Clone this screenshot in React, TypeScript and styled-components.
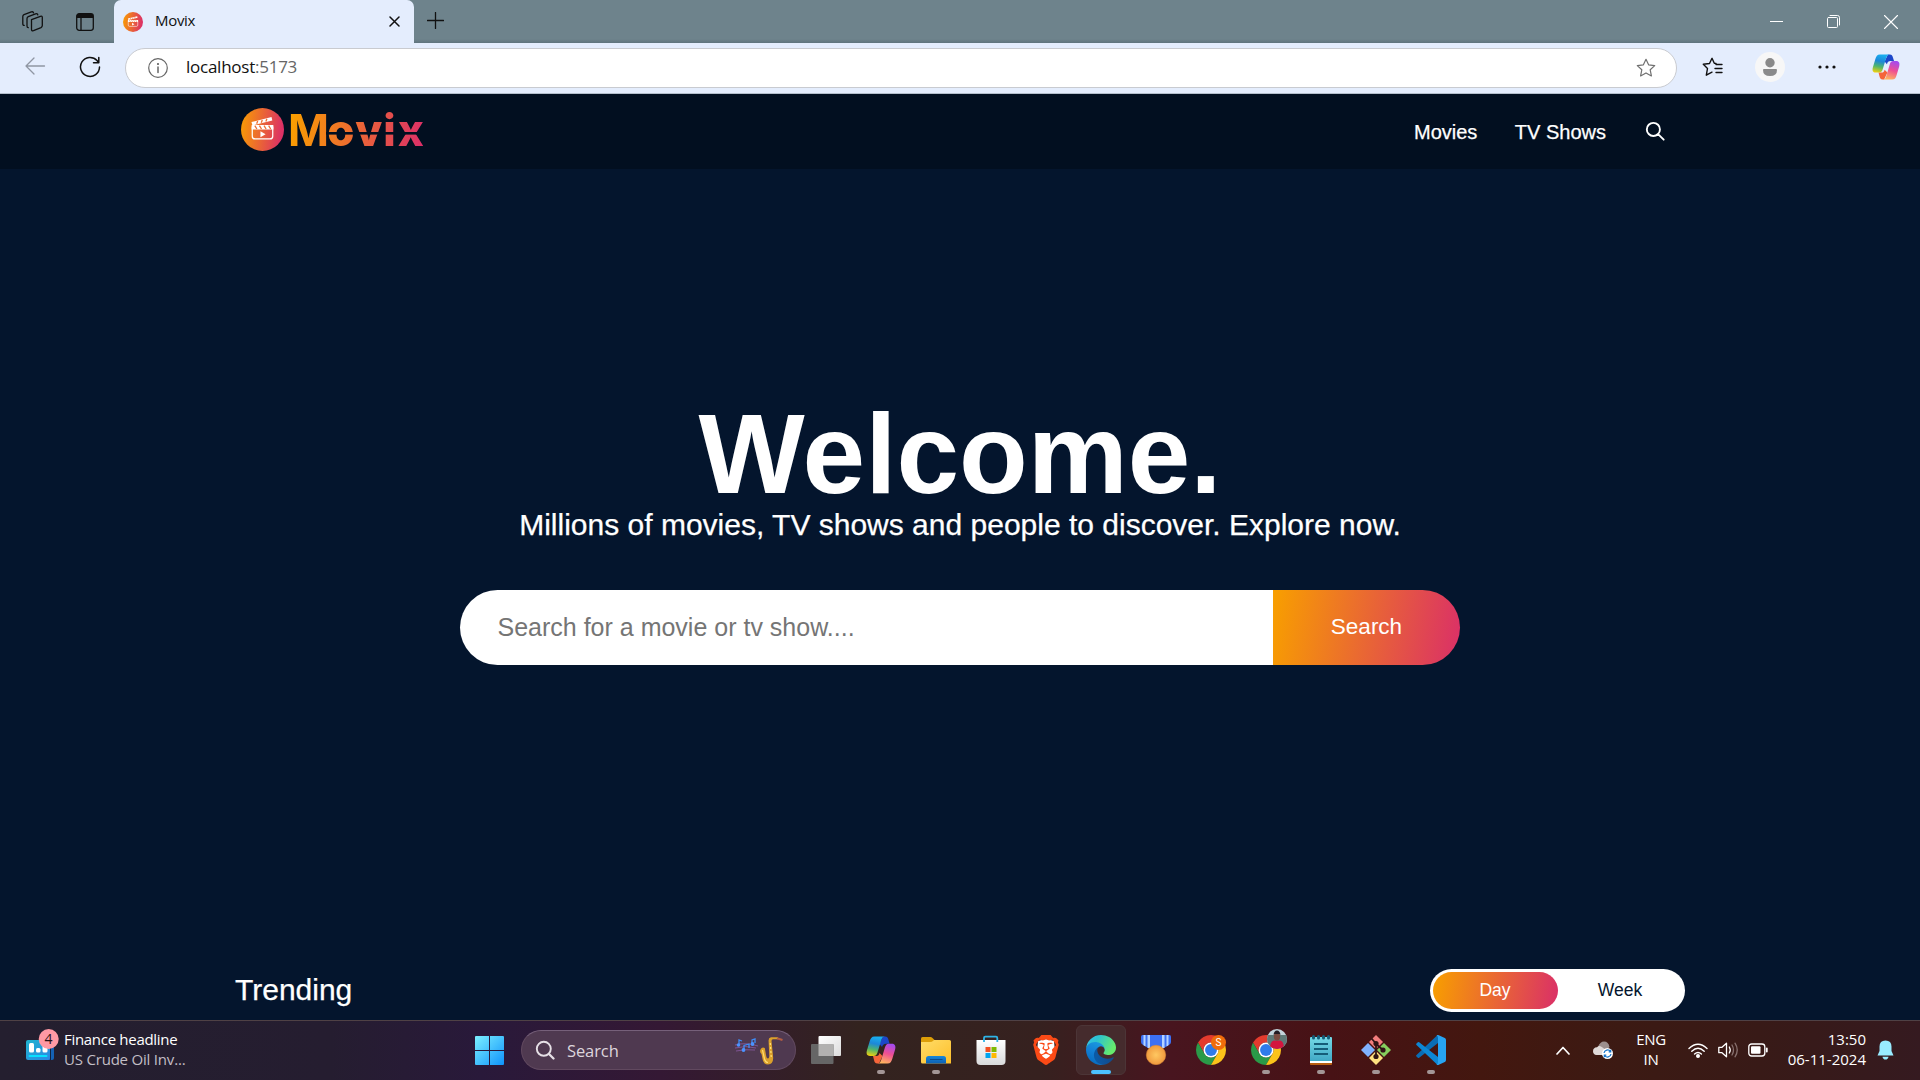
import React from "react";
import styled, { createGlobalStyle } from "styled-components";
import { HiOutlineSearch } from "react-icons/hi";
import { SiBrave } from "react-icons/si";

const UI = `"Open Sans", "Noto Sans", sans-serif`;
const GRADIENT = "linear-gradient(98.37deg, #f89e00 0.99%, #da2f68 100%)";

const GlobalStyle = createGlobalStyle`
  * { box-sizing: border-box; }
  body {
    margin: 0;
    background: #04152d;
    font-family: Arial, "Liberation Sans", sans-serif;
    overflow: hidden;
  }
  svg { display: block; flex-shrink: 0; }
`;

const Screen = styled.div`
  width: 1920px;
  height: 1080px;
  display: flex;
  flex-direction: column;
  overflow: hidden;
`;

/* ---------- browser chrome ---------- */

const TabStrip = styled.div`
  height: 43px;
  display: flex;
  background: linear-gradient(#6e838c 0 39px, #5f747e 43px);
`;

const StripTools = styled.div`
  width: 114px;
  height: 43px;
  display: flex;
  align-items: center;
  gap: 33px;
  padding-left: 22px;
`;

const Tab = styled.div`
  width: 300px;
  height: 43px;
  display: flex;
  align-items: center;
  padding: 0 14px 0 9px;
  background: #e4edfd;
  border-radius: 7px 7px 0 0;
`;

const TabTitle = styled.span`
  flex: 1;
  margin-left: 12px;
  margin-top: -3px;
  font: 15px/20px ${UI};
  letter-spacing: -0.3px;
  color: #111;
`;

const NewTab = styled.div`
  padding: 12px 13px;
`;

const WindowControls = styled.div`
  margin-left: auto;
  display: flex;
  align-items: center;
  gap: 44px;
  padding-right: 22px;
`;

const Toolbar = styled.div`
  height: 51px;
  display: flex;
  align-items: center;
  padding: 0 20px 2px 24px;
  background: #e4edfd;
  border-bottom: 1px solid #b4bfcc;
`;

const NavButtons = styled.div`
  display: flex;
  gap: 33px;
  width: 101px;
`;

const AddressBar = styled.div`
  width: 1552px;
  height: 40px;
  margin-top: 1px;
  display: flex;
  align-items: center;
  padding: 0 20px 0 22px;
  background: #fff;
  border: 1px solid #c9cbd0;
  border-radius: 20px;
`;

const Url = styled.div`
  flex: 1;
  margin-left: 18px;
  margin-top: -1px;
  font: 17px/24px ${UI};
  letter-spacing: -0.25px;
  color: #111;
`;

const Port = styled.span`
  color: #666;
`;

const ToolbarActions = styled.div`
  display: flex;
  align-items: center;
  flex: 1;
  padding-left: 25px;
`;

const Avatar = styled.div`
  margin: 0 33px 0 32px;
`;

const CopilotButton = styled.div`
  margin-left: auto;
`;

/* ---------- site ---------- */

const Site = styled.div`
  height: 926px;
  display: flex;
  flex-direction: column;
  background: #04152d;
`;

const Header = styled.header`
  height: 75px;
  display: flex;
  align-items: center;
  justify-content: space-between;
  padding: 0 254px 0 235px;
  background: #020f20;
`;

const Logo = styled.div`
  height: 75px;
  padding-left: 6px;
`;

const Menu = styled.nav`
  display: flex;
  align-items: center;
  gap: 37.5px;
`;

const MenuItem = styled.a`
  font-size: 20px;
  line-height: 24px;
  color: #fff;
  -webkit-text-stroke: 0.25px #fff;
`;

const SearchLink = styled.a`
  display: flex;
  color: #fff;
  font-size: 22.5px;
`;

const Hero = styled.section`
  flex: 1;
  display: flex;
  flex-direction: column;
  align-items: center;
  padding-top: 229px;
  color: #fff;
`;

const Title = styled.h1`
  margin: 0;
  font-size: 112.5px;
  line-height: 112px;
  font-weight: 700;
`;

const SubTitle = styled.p`
  margin: 0 0 50px;
  font-size: 30px;
  line-height: 30px;
  -webkit-text-stroke: 0.25px #fff;
`;

const SearchForm = styled.div`
  display: flex;
  width: 1000px;
  height: 75px;
`;

const SearchInput = styled.input`
  width: 813px;
  padding: 0 37.5px;
  border: 0;
  outline: 0;
  border-radius: 37.5px 0 0 37.5px;
  background: #fff;
  font: 25px "Liberation Sans", Arial, sans-serif;
  &::placeholder { color: #757575; }
`;

const SearchButton = styled.button`
  width: 187px;
  padding: 0 0 2px 0;
  border: 0;
  border-radius: 0 37.5px 37.5px 0;
  background: ${GRADIENT};
  color: #fff;
  font: 22.5px "Liberation Sans", Arial, sans-serif;
`;

const TrendingRow = styled.section`
  display: flex;
  align-items: center;
  justify-content: space-between;
  padding: 0 235px 8.5px;
`;

const SectionTitle = styled.span`
  font-size: 30px;
  line-height: 34px;
  color: #fff;
  -webkit-text-stroke: 0.25px #fff;
`;

const Switch = styled.div`
  display: flex;
  height: 42.5px;
  padding: 2.5px;
  border-radius: 22px;
  background: #fff;
`;

const SwitchItem = styled.span<{ $active?: boolean }>`
  width: 125px;
  height: 37.5px;
  border-radius: 19px;
  text-align: center;
  font-size: 17.5px;
  line-height: 36px;
  color: ${(p) => (p.$active ? "#fff" : "#04152d")};
  background: ${(p) => (p.$active ? GRADIENT : "none")};
`;

/* ---------- taskbar ---------- */

const Taskbar = styled.footer`
  height: 60px;
  display: flex;
  border-top: 1px solid #4f4145;
  color: #fff;
  font-family: ${UI};
  background: linear-gradient(
    90deg,
    #241f2f 0, #251d30 330px, #29193a 480px, #341834 660px, #33231f 860px,
    #36211f 1040px, #48151f 1170px, #471215 1330px, #43170f 1480px,
    #3c1a13 1620px, #381a17 1760px, #351a20 1920px
  );
`;

const Widgets = styled.div`
  width: 462px;
  display: flex;
  padding: 8px 0 0 25px;
`;

const WidgetText = styled.div`
  display: flex;
  flex-direction: column;
  margin-left: 4px;
  font-size: 15px;
  line-height: 20px;
  letter-spacing: -0.3px;
`;

const Muted = styled.span`
  letter-spacing: -0.2px;
  color: #c3bfc6;
`;

const StartButton = styled.div`
  width: 59px;
  padding: 15px 0 0 13px;
`;

const TaskSearch = styled.div`
  width: 275px;
  height: 40px;
  margin: 9px 2px 0 0;
  display: flex;
  align-items: center;
  padding: 0 11px 0 13px;
  border: 1px solid #61495f;
  border-top-color: #76607a;
  border-radius: 20px;
  background: #4f3950;
`;

const TaskSearchLabel = styled.span`
  flex: 1;
  margin-left: 12px;
  margin-top: 1px;
  font-size: 16.5px;
  letter-spacing: -0.1px;
  color: #ddd5dc;
`;

const AppCell = styled.div`
  width: 55px;
  height: 59px;
  display: flex;
  justify-content: center;
  padding-top: 4px;
`;

const AppTile = styled.div<{ $active?: boolean }>`
  width: 50px;
  height: 50px;
  display: flex;
  flex-direction: column;
  align-items: center;
  padding-top: 5px;
  border-radius: 6px;
  border: 1px solid ${(p) => (p.$active ? "#4c3537" : "transparent")};
  background: ${(p) => (p.$active ? "#452b2d" : "none")};
`;

const Indicator = styled.div<{ $active?: boolean }>`
  width: ${(p) => (p.$active ? 20 : 8)}px;
  height: 4px;
  border-radius: 2px;
  background: ${(p) => (p.$active ? "#4cc2ff" : "#a39696")};
`;

const Tray = styled.div`
  margin-left: auto;
  display: flex;
  align-items: center;
  padding: 0 26px 1px 0;
`;

const Stack = styled.div<{ $align: string; $width: number }>`
  width: ${(p) => p.$width}px;
  display: flex;
  flex-direction: column;
  align-items: ${(p) => p.$align};
  margin-top: -2px;
  font-size: 15px;
  line-height: 20px;
  letter-spacing: ${(p) => (p.$align === "center" ? -0.3 : 0)}px;
  white-space: nowrap;
`;

const TrayIcon = styled.div<{ $left: number }>`
  margin-left: ${(p) => p.$left}px;
`;

/* ---------- drawings ---------- */

const Clapper = ({ id, size }: { id: string; size: number }) => (
  <svg width={size} height={size} viewBox="0 0 42 42">
    <defs>
      <linearGradient id={id} x1="0" x2="1" y1="0" y2="0.12">
        <stop offset="0" stopColor="#f99f00" />
        <stop offset="1" stopColor="#dc3165" />
      </linearGradient>
    </defs>
    <circle cx="21" cy="21" r="21" fill={`url(#${id})`} />
    <path d="M11 18V27.500Q11 30.200 13.700 30.200H28.300Q31 30.200 31 27.500V18" fill="none" stroke="#fff" strokeWidth="1.200" />
    <path d="M10.400 16.700H31.600V21H10.400ZM10.200 13.700L29.800 8.800L30.600 12.200L11.200 17Z" fill="#fff" />
    <path d="M13.500 17.300l2 3.200M18 17.300l2 3.200M22.500 17.300l2 3.200M27 17.300l2 3.200M16.300 12.800l-1 2.600M20.800 11.700l-1 2.600M25.300 10.600l-1 2.600" stroke="#ee7036" strokeWidth="1.300" />
    <path d="M19 22.700V28.500L24 25.600Z" fill="#fff" />
  </svg>
);

const MovixLogo = () => (
  <svg width="190" height="75" viewBox="241 94 190 75">
    <defs>
      <linearGradient id="word" gradientUnits="userSpaceOnUse" x1="291" y1="120" x2="423" y2="140">
        <stop offset="0" stopColor="#fa9f00" />
        <stop offset="1" stopColor="#dc3068" />
      </linearGradient>
      <mask id="slit" maskUnits="userSpaceOnUse" x="241" y="94" width="190" height="75">
        <rect x="241" y="94" width="190" height="75" fill="#fff" />
        <rect x="326" y="132" width="104" height="2.600" fill="#000" />
      </mask>
    </defs>
    <svg x="241" y="108" width="43" height="43"><Clapper id="logo" size={43} /></svg>
    <g fill="url(#word)" mask="url(#slit)" fontFamily="Inter, sans-serif" fontSize="44">
      <text y="145.900" x="288 327.300 355.300 383.200 397.800" fontWeight="800">
        <tspan fontWeight="700">M</tspan>ovix
      </text>
    </g>
  </svg>
);

const Copilot = ({ id, size }: { id: string; size: number }) => (
  <svg width={size} height={size} viewBox="0 0 30 30">
    <defs>
      <linearGradient id={id + "a"} x1="0.4" y1="0" x2="0.2" y2="1">
        <stop offset="0" stopColor="#18aeef" />
        <stop offset="0.35" stopColor="#1d87d8" />
        <stop offset="0.65" stopColor="#4fb56c" />
        <stop offset="1" stopColor="#f5d10b" />
      </linearGradient>
      <linearGradient id={id + "b"} x1="0.7" y1="0" x2="0.4" y2="1">
        <stop offset="0" stopColor="#a34af0" />
        <stop offset="0.5" stopColor="#ef4f92" />
        <stop offset="1" stopColor="#ffb45f" />
      </linearGradient>
    </defs>
    <path d="M17 1.500H19C21.500 1.500 22 3 22.500 5L23.600 8.700H20C17.500 8.700 16.700 10 16 12L13.500 9Z" fill="#1c47c9" />
    <path d="M13 28.500H11.500C9 28.500 8.500 27 8 25L7 21H10.500C12.500 21 13 20 13.500 18L16.500 21Z" fill="#f5653a" />
    <path d="M8.500 1.500H19C16.500 1.500 15.800 3.500 15 6L11.500 17.500C10.700 20 9.700 21 7.500 21H4C1 21 0 18.800 .9 15.600L3.600 6.500C4.500 3.500 5.500 1.500 8.500 1.500Z" fill={`url(#${id}a)`} />
    <path d="M21.500 28.500H11.500C14 28.500 14.700 26.500 15.500 24L18.900 12.500C19.700 10 20.500 8.700 22.800 8.700H26C29 8.700 30 11.200 29.100 14.400L26.400 23.500C25.500 26.500 24.500 28.500 21.500 28.500Z" fill={`url(#${id}b)`} />
  </svg>
);

const line = { fill: "none", strokeLinecap: "round" as const, strokeLinejoin: "round" as const };

const WorkspacesIcon = () => (
  <svg width="21" height="21" viewBox="0 0 21 21" {...line} stroke="#111" strokeWidth="1.300">
    <path d="M9.500 8.700L18.400 5.300Q20.300 4.700 20.300 6.600V14.600Q20.300 16 19 16.600L11.500 19.700Q9.500 20.300 9.500 18.300Z" />
    <path d="M6.300 16.700Q5 16.700 5 15V7.800Q5 6.300 6.300 5.700L13.500 2.900Q15.500 2.200 15.800 3.900" />
    <path d="M2.200 14.400Q.8 14.400 .8 12.800V5.500Q.8 4.200 2 3.600L9.300 .9Q11.200 .3 11.500 1.800" />
  </svg>
);

const TabActionsIcon = () => (
  <svg width="18" height="18" viewBox="0 0 18 18">
    <rect x=".7" y=".7" width="16.600" height="16.600" rx="2.500" fill="none" stroke="#111" strokeWidth="1.300" />
    <path d="M.7 3Q.7 .7 3 .7H15Q17.300 .7 17.300 3V5H.7Z" fill="#111" />
    <path d="M5 5V17" stroke="#111" strokeWidth="1.300" />
  </svg>
);

const STAR = "M10 1.300L12.600 6.800L18.700 7.600L14.200 11.800L15.400 17.900L10 14.900L4.600 17.900L5.800 11.800L1.300 7.600L7.400 6.800Z";

const ChromeIcon = () => (
  <svg width="30" height="30" viewBox="0 0 48 48">
    <path d="M24 12H44.780A24 24 0 0 0 3.220 12L13.610 30A12 12 0 0 1 24 12Z" fill="#e33b2e" />
    <path d="M13.610 30L3.220 12A24 24 0 0 0 24 48L34.390 30A12 12 0 0 1 13.610 30Z" fill="#2a9a48" />
    <path d="M34.390 30L24 48A24 24 0 0 0 44.780 12H24A12 12 0 0 1 34.390 30Z" fill="#fcc31a" />
    <circle cx="24" cy="24" r="12" fill="#fff" />
    <circle cx="24" cy="24" r="9.500" fill="#2f7bea" />
  </svg>
);

const BadgedSvg = styled.svg`
  margin-top: -6px;
`;

const ChromeWithBadge = ({ children }: { children: React.ReactNode }) => (
  <BadgedSvg width="44" height="36" viewBox="-7 -6 44 36">
    <ChromeIcon />
    {children}
  </BadgedSvg>
);

const TaskViewIcon = () => (
  <svg width="30" height="30" viewBox="0 0 30 30">
    <defs>
      <linearGradient id="tv" x2="1" y2="1"><stop stopColor="#fff" /><stop offset="1" stopColor="#dcdcdc" /></linearGradient>
    </defs>
    <rect x="7.500" y="1" width="22.500" height="20" rx="1" fill="url(#tv)" />
    <rect x="0" y="9" width="22.500" height="20" rx="1" fill="#666" />
    <rect x="7.500" y="9" width="15" height="12" fill="#b2b1b0" />
  </svg>
);

const FolderIcon = () => (
  <svg width="30" height="30" viewBox="0 0 30 30">
    <defs>
      <linearGradient id="fo" x2="1" y2="1"><stop stopColor="#ffdc68" /><stop offset="1" stopColor="#fdbf2a" /></linearGradient>
      <linearGradient id="fb" x2="0" y2="1"><stop stopColor="#1787d8" /><stop offset="1" stopColor="#0d60b4" /></linearGradient>
    </defs>
    <path d="M0 3.500Q0 2 1.500 2H9.500Q10.500 2 11.500 3L13.500 5V10H0Z" fill="#dd9e08" />
    <path d="M0 7H9Q11 7 12.500 5.500L13 5H28.500Q30 5 30 6.500V28.500H1.500Q0 28.500 0 27Z" fill="url(#fo)" />
    <path d="M5 28.500V23.500Q5 21 7.500 21H22.500Q25 21 25 23.500V28.500Z" fill="url(#fb)" />
    <path d="M9 24.500H21.500" stroke="#0b4c8d" strokeWidth="1" />
  </svg>
);

const StoreIcon = () => (
  <svg width="30" height="30" viewBox="0 0 30 30">
    <defs><linearGradient id="st" x2="0" y2="1"><stop stopColor="#fff" /><stop offset="1" stopColor="#d9dadb" /></linearGradient></defs>
    <path d="M8 6.500V3Q8 1.700 9.300 1.700H20Q21.300 1.700 21.300 3V6.500" fill="none" stroke="#2fb4e6" strokeWidth="1.800" />
    <path d="M.5 5H29.500V26Q29.500 30 25.500 30H4.500Q.5 30 .5 26Z" fill="url(#st)" />
    <path d="M8 5V7M21.300 5V7" stroke="#2fb4e6" strokeWidth="1.800" />
    <rect x="9.500" y="12" width="5" height="5" fill="#f25022" />
    <rect x="15.500" y="12" width="5" height="5" fill="#7fba00" />
    <rect x="9.500" y="18" width="5" height="5" fill="#00a4ef" />
    <rect x="15.500" y="18" width="5" height="5" fill="#ffb900" />
  </svg>
);

const BraveIcon = () => (
  <svg width="30" height="30" viewBox="0 0 30 30">
    <path d="M7 6L15 4L23 6L24 17L15 26L6 17Z" fill="#fff" />
    <SiBrave size={30} color="#fb4a16" />
  </svg>
);

const EdgeIcon = () => (
  <svg width="30" height="30" viewBox="0 0 256 256">
    <defs>
      <linearGradient id="e1" x1="0.2" x2="1"><stop stopColor="#0c59a4" /><stop offset="1" stopColor="#114a8b" /></linearGradient>
      <linearGradient id="e2" x1="0.7" y1="0" x2="0.3" y2="1"><stop stopColor="#1b9de2" /><stop offset="0.5" stopColor="#1380d5" /><stop offset="1" stopColor="#0669bc" /></linearGradient>
      <linearGradient id="e3" x1="0" x2="1" y2="0.4"><stop stopColor="#35c1f1" /><stop offset="0.4" stopColor="#2dc3cf" /><stop offset="1" stopColor="#66eb6e" /></linearGradient>
    </defs>
    <path fill="url(#e1)" d="M231.070 190.540c-3.430 1.800-6.900 3.440-10.480 4.780a101.150 101.150 0 0 1-35.920 6.460c-47.340 0-88.540-32.570-88.540-74.320A31.480 31.480 0 0 1 112.500 100c-42.800 1.800-53.800 46.400-53.800 72.530 0 73.880 68.090 81.370 82.760 81.370 7.910 0 19.840-2.300 27-4.560l1.310-.44a128.340 128.340 0 0 0 66.600-52.800 4 4 0 0 0-5.300-5.560z" />
    <path fill="url(#e2)" d="M105.730 241.420a79.200 79.200 0 0 1-22.740-21.340 80.720 80.720 0 0 1 29.530-120c3.120-1.470 8.450-4.050 15.540-4a32.350 32.350 0 0 1 25.690 13 31.880 31.880 0 0 1 6.360 18.660c0-.21 24.460-79.600-80-79.600-43.900 0-80 41.660-80 78.210a130.150 130.150 0 0 0 12.110 56 128 128 0 0 0 156.380 67.110 75.550 75.550 0 0 1-62.780-8z" />
    <path fill="url(#e3)" d="M152.330 148.860c-.81 1.050-3.300 2.500-3.300 5.660 0 2.610 1.700 5.120 4.720 7.230 14.380 10 41.490 8.680 41.560 8.680a59.560 59.560 0 0 0 30.270-8.350A61.380 61.380 0 0 0 256 109.200c.26-22.410-8-37.310-11.340-43.910C223.460 23.840 177.720 0 128 0A128 128 0 0 0 0 126.200c.48-36.540 36.800-66.050 80-66.050 3.500 0 23.460.34 42 10.070 16.340 8.580 24.900 18.940 30.850 29.210 6.180 10.670 7.280 24.150 7.280 29.520s-2.740 13.330-7.800 19.910z" />
  </svg>
);

const MedalIcon = () => (
  <svg width="30" height="30" viewBox="0 0 30 30">
    <defs>
      <radialGradient id="md"><stop stopColor="#ffc861" /><stop offset="1" stopColor="#f09a3e" /></radialGradient>
    </defs>
    <path d="M0 1.500Q0 0 1.500 0H28.500Q30 0 30 1.500V7Q30 8.500 28.500 9.500L23 13H7L1.500 9.500Q0 8.500 0 7Z" fill="#3c70f4" />
    <path d="M2.500 0H4.500V11.500L2.500 10.200ZM6.500 0H9V13H7L6.500 12.700ZM21 0H23.500V12.700L23 13H21ZM25.500 0H27.500V10.200L25.500 11.500Z" fill="#b5d3ff" />
    <circle cx="15" cy="20" r="9.700" fill="url(#md)" stroke="#dd8a35" strokeWidth=".6" />
  </svg>
);

const NotepadIcon = () => (
  <svg width="30" height="30" viewBox="0 0 30 30">
    <defs><linearGradient id="np" x2="0" y2="1"><stop stopColor="#74d9e6" /><stop offset="1" stopColor="#41a9c6" /></linearGradient></defs>
    <rect x="4" y="26" width="22" height="4" rx=".8" fill="#b95d10" />
    <rect x="4" y="24" width="22" height="4" fill="#fff" />
    <path d="M4 3Q4 2 5 2H25Q26 2 26 3V26H4Z" fill="url(#np)" />
    <path d="M8 9H22M8 14H22M8 19H22" stroke="#155d78" strokeWidth="1.800" />
    <path d="M7.500 1.500V3M12.500 1.500V3M17.500 1.500V3M22.500 1.500V3" stroke="#155d78" strokeWidth="3" strokeLinecap="round" />
  </svg>
);

const GitIcon = () => (
  <svg width="30" height="30" viewBox="0 0 30 30">
    <path d="M15 0L22 7L15 14L8 7Z" fill="#f27d7d" />
    <path d="M7 8L14 15L7 22L0 15Z" fill="#80b2ff" />
    <path d="M23 8L30 15L23 22L16 15Z" fill="#86cf5d" />
    <path d="M15 16L22 23L15 30L8 23Z" fill="#ffe280" />
    <path d="M10.500 3.500L15 8.500V22M15 9L22 15" stroke="#2f1415" strokeWidth="1.800" fill="none" />
    <circle cx="15" cy="8.500" r="2.600" fill="#2f1415" />
    <circle cx="15" cy="21.500" r="2.600" fill="#2f1415" />
    <circle cx="22" cy="15" r="2.600" fill="#2f1415" />
  </svg>
);

const CodeIcon = () => (
  <svg width="30" height="30" viewBox="0 0 30 30">
    <path d="M22 8L3.200 22.800Q2.500 23.200 1.800 22.700L.5 21.500Q-.3 20.700 .5 20L20.500 1Q22 -.3 22 1Z" fill="#0a6db5" />
    <path d="M22 22L3.200 7.200Q2.500 6.800 1.800 7.300L.5 8.500Q-.3 9.300 .5 10L20.500 29Q22 30.300 22 29Z" fill="#0d87d4" />
    <path d="M20.500 29.700Q22 29 22 27V3Q22 1 20.500 .3Q21.500 -.3 22.800 .2L28.800 3Q30 3.600 30 5V25Q30 26.400 28.800 27L22.800 29.800Q21.500 30.300 20.500 29.700Z" fill="#27a4f2" />
  </svg>
);

const WidgetsIcon = () => (
  <svg width="35" height="32" viewBox="25 1028 35 32" overflow="visible">
    <defs><linearGradient id="wg" x2="1" y2="1"><stop stopColor="#20b4cf" /><stop offset="1" stopColor="#2b86e4" /></linearGradient></defs>
    <rect x="44" y="1039" width="10" height="20" rx="2" fill="#1461b4" />
    <path d="M50.500 1039V1059" stroke="#10233f" />
    <rect x="26" y="1039" width="24" height="20" rx="2" fill="url(#wg)" />
    <rect x="29" y="1042" width="5" height="9.500" rx="1.500" fill="#fff" />
    <rect x="36" y="1047" width="4.500" height="4.500" rx="1.500" fill="#fff" />
    <rect x="42.500" y="1044" width="5" height="7.500" rx="1.500" fill="#fff" />
    <path d="M29.500 1055H46.500" stroke="#08e0ff" strokeWidth="2" strokeLinecap="round" />
    <circle cx="48.700" cy="1038" r="10" fill="#ff99a4" />
    <text x="48.500" y="1043" textAnchor="middle" fontFamily={UI} fontSize="14" fill="#2a1116">4</text>
  </svg>
);

const MusicArt = () => (
  <svg width="50" height="30" viewBox="734 1035 50 30">
    <path d="M735 1045Q745 1042 758 1046M735 1048Q746 1045 756 1048M736 1051Q746 1049 755 1050" stroke="#8a5aa5" strokeWidth=".8" fill="none" />
    <path d="M739 1045V1040L742 1041M744 1050.500V1045.500L749 1044V1048M752 1044V1040L755 1039V1043" stroke="#3f8cf5" strokeWidth="1.300" fill="none" />
    <circle cx="738.500" cy="1045" r="1.800" fill="#4b93ff" />
    <circle cx="743.500" cy="1050" r="1.900" fill="#4b93ff" />
    <circle cx="752.500" cy="1044" r="1.900" fill="#4b93ff" />
    <path d="M778 1037.300H771Q768.300 1037.800 768.600 1041L769.300 1056Q769 1058.500 768 1058.500Q766.500 1058.500 766 1055L764.800 1048Q762 1046.500 760.500 1049.500Q759.300 1052 761.500 1054L762.500 1059Q763.500 1064.500 768 1064.500Q773 1064.500 773.200 1058L771.500 1041Q771.500 1039.500 773 1039.300H778Z" fill="#dba02b" />
    <path d="M777 1038.200L782.500 1040" stroke="#b45d43" strokeWidth="2" />
    <path d="M762.500 1050L764.500 1059Q765.500 1062.500 768 1062.500" stroke="#ffdc70" strokeWidth="1.200" fill="none" />
    <path d="M770.300 1043L771.300 1058" stroke="#ffe07a" strokeWidth="1.200" fill="none" strokeDasharray="2 2" />
  </svg>
);

const apps: { name: string; icon: React.ReactNode; state?: "open" | "active" }[] = [
  { name: "taskview", icon: <TaskViewIcon /> },
  { name: "copilot", icon: <Copilot id="task" size={30} />, state: "open" },
  { name: "explorer", icon: <FolderIcon />, state: "open" },
  { name: "store", icon: <StoreIcon /> },
  { name: "brave", icon: <BraveIcon /> },
  { name: "edge", icon: <EdgeIcon />, state: "active" },
  { name: "rewards", icon: <MedalIcon /> },
  {
    name: "chrome",
    icon: (
      <ChromeWithBadge>
        <circle cx="22.500" cy="7.500" r="7.500" fill="#ef6c0b" />
        <text x="22.500" y="11.300" textAnchor="middle" fontFamily="Roboto, sans-serif" fontSize="10" fill="#fff">S</text>
      </ChromeWithBadge>
    ),
  },
  {
    name: "chrome-profile",
    icon: (
      <ChromeWithBadge>
        <clipPath id="face"><circle cx="26" cy="4" r="10" /></clipPath>
        <g clipPath="url(#face)">
          <rect x="16" y="-6" width="20" height="20" fill="#c3d3da" />
          <rect x="16" y="0" width="20" height="14" fill="#5f7a78" />
          <path d="M19 14Q19 6 23 5.500H29Q33 6 33 14Z" fill="#d3163f" />
          <ellipse cx="26" cy="1.500" rx="3.200" ry="4" fill="#7a4b40" />
          <path d="M22.500 0Q23 -4.500 26 -4.500Q29 -4.500 29.500 0L28.500 -1H23.500Z" fill="#231b22" />
        </g>
      </ChromeWithBadge>
    ),
    state: "open",
  },
  { name: "notepad", icon: <NotepadIcon />, state: "open" },
  { name: "git", icon: <GitIcon />, state: "open" },
  { name: "code", icon: <CodeIcon />, state: "open" },
];

const IconSlot = styled.div`
  height: 39px;
  padding-top: 4px;
`;

export default function App() {
  return (
    <Screen>
      <GlobalStyle />
      <TabStrip>
        <StripTools>
          <WorkspacesIcon />
          <TabActionsIcon />
        </StripTools>
        <Tab>
          <Clapper id="favicon" size={20} />
          <TabTitle>Movix</TabTitle>
          <svg width="11" height="11" viewBox="0 0 11 11" {...line} stroke="#111" strokeWidth="1.500"><path d="M1 1L10 10M10 1L1 10" /></svg>
        </Tab>
        <NewTab>
          <svg width="17" height="17" viewBox="0 0 17 17" {...line} stroke="#111" strokeWidth="1.300"><path d="M8.500 .5V16.500M.5 8.500H16.500" /></svg>
        </NewTab>
        <WindowControls>
          <svg width="13" height="13" viewBox="0 0 13 13"><path d="M0 6.500H13" stroke="#fff" /></svg>
          <svg width="13" height="13" viewBox="0 0 13 13" {...line} stroke="#fff"><rect x=".5" y="2.500" width="10" height="10" rx="1" /><path d="M3 .5H10.500Q12.500 .5 12.500 2.500V10" /></svg>
          <svg width="14" height="14" viewBox="0 0 14 14" {...line} stroke="#fff" strokeWidth="1.100"><path d="M.5 .5L13.500 13.500M13.500 .5L.5 13.500" /></svg>
        </WindowControls>
      </TabStrip>

      <Toolbar>
        <NavButtons>
          <svg width="22" height="20" viewBox="0 0 22 20" {...line} stroke="#8f96a3" strokeWidth="1.300"><path d="M20.500 10H2M10 2L2 10L10 18" /></svg>
          <svg width="22" height="22" viewBox="0 0 22 22" {...line} stroke="#111" strokeWidth="1.500"><path d="M20.500 11A9.500 9.500 0 1 1 18 4.500L19.500 6.500M19.800 1.500V6.800H14.500" /></svg>
        </NavButtons>
        <AddressBar>
          <svg width="20" height="20" viewBox="0 0 20 20" {...line} stroke="#666" strokeWidth="1.200"><circle cx="10" cy="10" r="9.300" /><path d="M10 9V14.500" strokeWidth="1.500" /><circle cx="10" cy="6" r=".5" fill="#666" /></svg>
          <Url>localhost<Port>:5173</Port></Url>
          <svg width="20" height="20" viewBox="0 0 20 20" {...line} stroke="#707070" strokeWidth="1.200"><path d={STAR} /></svg>
        </AddressBar>
        <ToolbarActions>
          <svg width="21" height="20" viewBox="0 0 21 20" {...line} stroke="#111" strokeWidth="1.400">
            <path d="M14 6.500L12.300 6.300L10 1.300L7.500 6.500L1.300 7.300L5.500 11.500L4.300 18.200L10 15.200M14 7.500H20M13 11.500H20M14 15.500H20" />
          </svg>
          <Avatar>
            <svg width="30" height="30" viewBox="0 0 30 30"><circle cx="15" cy="15" r="15" fill="#f7f7f7" /><circle cx="15" cy="10.800" r="4.700" fill="#8a8a8a" /><path d="M8 18Q8 17 9 17H21Q22 17 22 18Q22 24 15 24Q8 24 8 18Z" fill="#8a8a8a" /></svg>
          </Avatar>
          <svg width="18" height="4" viewBox="0 0 18 4" fill="#111"><circle cx="2" cy="2" r="1.600" /><circle cx="9" cy="2" r="1.600" /><circle cx="16" cy="2" r="1.600" /></svg>
          <CopilotButton><Copilot id="bar" size={28} /></CopilotButton>
        </ToolbarActions>
      </Toolbar>

      <Site>
        <Header>
          <Logo><MovixLogo /></Logo>
          <Menu>
            <MenuItem>Movies</MenuItem>
            <MenuItem>TV Shows</MenuItem>
            <SearchLink><HiOutlineSearch /></SearchLink>
          </Menu>
        </Header>
        <Hero>
          <Title>Welcome.</Title>
          <SubTitle>Millions of movies, TV shows and people to discover. Explore now.</SubTitle>
          <SearchForm>
            <SearchInput placeholder="Search for a movie or tv show...." />
            <SearchButton>Search</SearchButton>
          </SearchForm>
        </Hero>
        <TrendingRow>
          <SectionTitle>Trending</SectionTitle>
          <Switch>
            <SwitchItem $active>Day</SwitchItem>
            <SwitchItem>Week</SwitchItem>
          </Switch>
        </TrendingRow>
      </Site>

      <Taskbar>
        <Widgets>
          <WidgetsIcon />
          <WidgetText>
            <span>Finance headline</span>
            <Muted>US Crude Oil Inv...</Muted>
          </WidgetText>
        </Widgets>
        <StartButton>
          <svg width="29" height="29" viewBox="0 0 29 29">
            <defs><linearGradient id="win" gradientUnits="userSpaceOnUse" x1="0" y1="0" x2="29" y2="29"><stop stopColor="#7cf0ff" /><stop offset="1" stopColor="#0f93fb" /></linearGradient></defs>
            <path d="M0 1Q0 0 1 0H14V14H0ZM15 0H28Q29 0 29 1V14H15ZM0 15H14V29H1Q0 29 0 28ZM15 15H29V28Q29 29 28 29H15Z" fill="url(#win)" />
          </svg>
        </StartButton>
        <TaskSearch>
          <svg width="20" height="20" viewBox="0 0 20 20" {...line} stroke="#e6e0e6" strokeWidth="1.900"><circle cx="8.800" cy="8.800" r="7" /><path d="M14 14L18.500 18.500" strokeWidth="2.300" /></svg>
          <TaskSearchLabel>Search</TaskSearchLabel>
          <MusicArt />
        </TaskSearch>
        {apps.map((app) => (
          <AppCell key={app.name}>
            <AppTile $active={app.state === "active"}>
              <IconSlot>{app.icon}</IconSlot>
              {app.state && <Indicator $active={app.state === "active"} />}
            </AppTile>
          </AppCell>
        ))}
        <Tray>
          <svg width="14" height="9" viewBox="0 0 14 9" {...line} stroke="#fff" strokeWidth="1.700"><path d="M1 8L7 1.500L13 8" /></svg>
          <TrayIcon $left={23}>
            <svg width="20" height="20" viewBox="0 0 20 20">
              <path d="M5 7Q7 1.500 11 1.500Q15.500 1.500 16.500 7L14 10Z" fill="#9c8f8e" />
              <path d="M3.500 15Q0 14.500 0 11.200Q0 7.500 4 7.200Q6.500 4.500 9.500 7.500L16 12L10 15Z" fill="#e0dad9" />
              <circle cx="14.500" cy="13.500" r="5.500" fill="#fff" />
              <path d="M11 13A3.600 3.600 0 0 1 17.500 11.500M18 14A3.600 3.600 0 0 1 11.500 15.500M17.700 9.800V11.800H15.700M11.300 17.200V15.200H13.300" stroke="#1473c8" strokeWidth="1.200" fill="none" />
            </svg>
          </TrayIcon>
          <TrayIcon $left={18}>
            <Stack $align="center" $width={40}><span>ENG</span><span>IN</span></Stack>
          </TrayIcon>
          <TrayIcon $left={17}>
            <svg width="20" height="17" viewBox="0 0 20 17" {...line} stroke="#fff" strokeWidth="1.400"><path d="M1 6.500Q10 -2 19 6.500M3.800 9.300Q10 3.300 16.200 9.300M6.600 12Q10 8.800 13.400 12" /><circle cx="10" cy="14" r="1.300" fill="#fff" /></svg>
          </TrayIcon>
          <TrayIcon $left={10}>
            <svg width="21" height="18" viewBox="0 0 21 18" {...line} stroke="#fff" strokeWidth="1.300"><path d="M.8 6.300H4L8.500 2.200V15.800L4 11.700H.8ZM11.300 6Q13.200 9 11.300 12" /><path d="M14 4Q17 9 14 14M17 2.200Q21.500 9 17 15.800" stroke="#87706e" /></svg>
          </TrayIcon>
          <TrayIcon $left={9}>
            <svg width="20" height="14" viewBox="0 0 20 14" {...line} stroke="#fff" strokeWidth="1.300"><rect x=".8" y="1" width="16" height="12" rx="2.800" /><rect x="3" y="3.200" width="9.500" height="7.600" rx="1" fill="#fff" stroke="none" /><path d="M18.800 5.500V8.500" strokeWidth="1.800" /></svg>
          </TrayIcon>
          <TrayIcon $left={0}>
            <Stack $align="flex-end" $width={98}><span>13:50</span><span>06-11-2024</span></Stack>
          </TrayIcon>
          <TrayIcon $left={11}>
            <svg width="17" height="20" viewBox="0 0 17 20" fill="#98ebff"><path d="M8.500 .5Q14.500 .5 14.500 6.500V11L16.500 15.500H.5L2.500 11V6.500Q2.500 .5 8.500 .5ZM5.500 16.700H11.500Q11 19.500 8.500 19.500Q6 19.500 5.500 16.700Z" /></svg>
          </TrayIcon>
        </Tray>
      </Taskbar>
    </Screen>
  );
}
